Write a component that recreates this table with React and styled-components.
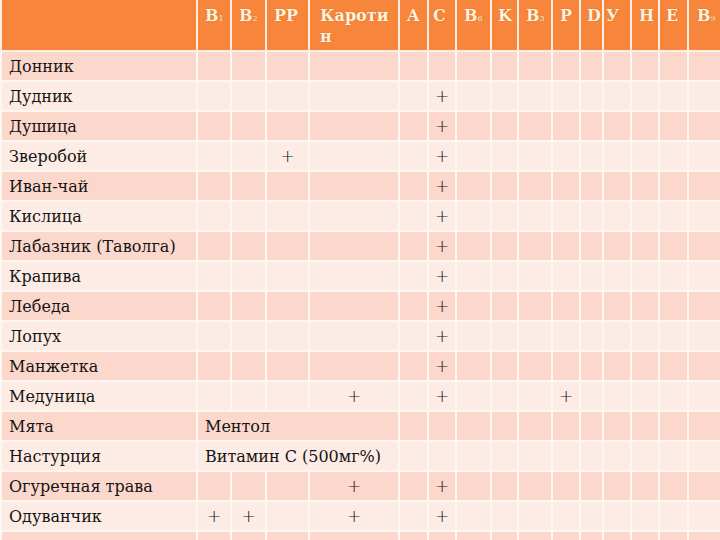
import React from 'react';
import styled, { createGlobalStyle } from 'styled-components';

const GlobalStyle = createGlobalStyle`
  html, body {
    margin: 0;
    padding: 0;
    background: #ffffff;
    overflow: hidden;
  }
`;

const Page = styled.div`
  width: 720px;
  height: 540px;
  overflow: hidden;
`;

const Table = styled.table`
  width: 720px;
  table-layout: fixed;
  border-collapse: collapse;
  font-family: "DejaVu Serif", serif;
`;

const HeadCell = styled.th`
  height: 45px;
  padding: 5px 0 0 ${(p) => p.$pad ?? 7}px;
  background: #f7853b;
  border: 2px solid #fdeee2;
  border-top: none;
  color: #fff3de;
  font-size: 16px;
  font-weight: bold;
  line-height: 21px;
  text-align: left;
  vertical-align: top;
  text-shadow: 0 0 1px rgba(150, 60, 0, 0.5);
  white-space: nowrap;
  overflow: hidden;

  sub {
    font-size: 8px;
    vertical-align: baseline;
    font-weight: normal;
  }
`;

const Row = styled.tr`
  background: ${(p) => (p.$odd ? '#fcd7cc' : '#fdece5')};
`;

const Cell = styled.td`
  height: 28px;
  padding: 0 0 0 7px;
  border: 2px solid #fff7f2;
  font-size: 16px;
  color: #151515;
  white-space: nowrap;
  overflow: hidden;
  vertical-align: middle;
`;

const Mark = styled(Cell)`
  padding: 0;
  text-align: center;
  font-family: "DejaVu Sans", sans-serif;
  font-weight: 200;
  font-size: 17px;
`;

const columns = [
  { key: 'name', width: 196 },
  { key: 'b1', width: 34, label: <>B<sub>1</sub></> },
  { key: 'b2', width: 35, label: <>B<sub>2</sub></> },
  { key: 'pp', width: 43, label: 'PP' },
  { key: 'car', width: 90, label: <>Кароти<br />н</>, pad: 10 },
  { key: 'a', width: 29, label: 'A' },
  { key: 'c', width: 28, label: 'C', pad: 4 },
  { key: 'b6', width: 35, label: <>B<sub>6</sub></> },
  { key: 'k', width: 27, label: 'K', pad: 6 },
  { key: 'b3', width: 34, label: <>B<sub>3</sub></> },
  { key: 'p', width: 28, label: 'P' },
  { key: 'd', width: 23, label: 'D', pad: 6 },
  { key: 'u', width: 28, label: 'У', pad: 2 },
  { key: 'h', width: 28, label: 'Н', pad: 7 },
  { key: 'e', width: 29, label: 'Е', pad: 6 },
  { key: 'b9', width: 33, label: <>B<sub>9</sub></>, pad: 8 },
];

const rows = [
  { name: 'Донник', marks: [] },
  { name: 'Дудник', marks: ['c'] },
  { name: 'Душица', marks: ['c'] },
  { name: 'Зверобой', marks: ['pp', 'c'] },
  { name: 'Иван-чай', marks: ['c'] },
  { name: 'Кислица', marks: ['c'] },
  { name: 'Лабазник (Таволга)', marks: ['c'] },
  { name: 'Крапива', marks: ['c'] },
  { name: 'Лебеда', marks: ['c'] },
  { name: 'Лопух', marks: ['c'] },
  { name: 'Манжетка', marks: ['c'] },
  { name: 'Медуница', marks: ['car', 'c', 'p'] },
  { name: 'Мята', note: 'Ментол' },
  { name: 'Настурция', note: 'Витамин С (500мг%)' },
  { name: 'Огуречная трава', marks: ['car', 'c'] },
  { name: 'Одуванчик', marks: ['b1', 'b2', 'car', 'c'] },
  { name: 'Подорожник', marks: [] },
];

const dataCols = columns.slice(1);

const App = () => (
  <Page>
    <GlobalStyle />
    <Table>
      <colgroup>
        {columns.map((c) => (
          <col key={c.key} style={{ width: c.width }} />
        ))}
      </colgroup>
      <thead>
        <tr>
          {columns.map((c) => (
            <HeadCell key={c.key} $pad={c.pad}>{c.label}</HeadCell>
          ))}
        </tr>
      </thead>
      <tbody>
        {rows.map((r, i) => (
          <Row key={r.name} $odd={i % 2 === 0}>
            <Cell>{r.name}</Cell>
            {r.note ? (
              <>
                <Cell colSpan={4}>{r.note}</Cell>
                {dataCols.slice(4).map((c) => (
                  <Cell key={c.key} />
                ))}
              </>
            ) : (
              dataCols.map((c) =>
                r.marks.includes(c.key) ? <Mark key={c.key}>+</Mark> : <Cell key={c.key} />
              )
            )}
          </Row>
        ))}
      </tbody>
    </Table>
  </Page>
);

export default App;
